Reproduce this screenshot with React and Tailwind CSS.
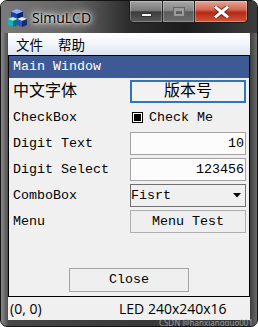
import React from 'react';

const mono = "font-['Liberation_Mono','Noto_Sans_CJK_SC',monospace]";

// Little three-cube app icon in the title bar
const AppIcon = () => (
    <svg width="19" height="18" viewBox="0 0 19 18">
        <polygon points="9,0 15,2.5 9,5 3,2.5" fill="#8fb4ff" />
        <polygon points="3,2.5 9,5 9,11 3,8.5" fill="#1c3fb0" />
        <polygon points="9,5 15,2.5 15,8.5 9,11" fill="#0d2470" />
        <polygon points="5,8 10,10 5,12 0,10" fill="#9ff5f0" />
        <polygon points="0,10 5,12 5,18 0,16" fill="#17b3b0" />
        <polygon points="5,12 10,10 10,16 5,18" fill="#0a6e78" />
        <polygon points="14,8 19,10 14,12 9,10" fill="#e8eef8" />
        <polygon points="9,10 14,12 14,18 9,16" fill="#2850c8" />
        <polygon points="14,12 19,10 19,16 14,18" fill="#122a78" />
    </svg>
);

const CaptionButtons = () => (
    <div className="ml-auto mr-[9px] flex h-[22px] overflow-hidden rounded-b-[5px] border border-t-0 border-[#1b1b1b]">
        {/* Minimize */}
        <div className="flex w-[33px] items-end justify-center border-r border-[#262626] bg-[linear-gradient(180deg,#a2a2a2_0%,#7a7a7a_45%,#3c3c3c_52%,#5a5a5a_100%)] pb-[5px] shadow-[inset_0_0_0_1px_rgba(255,255,255,0.25)]">
            <div className="h-[4px] w-[11px] border border-[#333] bg-white" />
        </div>
        {/* Maximize (disabled) */}
        <div className="flex w-[32px] items-center justify-center border-r border-[#262626] bg-[linear-gradient(180deg,#a8a8a8_0%,#858585_45%,#5a5a5a_52%,#6e6e6e_100%)] shadow-[inset_0_0_0_1px_rgba(255,255,255,0.25)]">
            <div className="h-[8px] w-[10px] border-2 border-t-[3px] border-[#9a9a9a] shadow-[0_0_0_1px_#666]" />
        </div>
        {/* Close */}
        <div className="flex w-[52px] items-center justify-center bg-[linear-gradient(180deg,#e6a595_0%,#d36a55_40%,#b52a15_55%,#d4553a_100%)] shadow-[inset_0_0_0_1px_rgba(255,255,255,0.3)]">
            <svg width="15" height="12" viewBox="0 0 15 12">
                <path d="M2 1.5 L13 10.5 M13 1.5 L2 10.5" stroke="#5a1a10" strokeWidth="4.5" strokeLinecap="square" />
                <path d="M2 1.5 L13 10.5 M13 1.5 L2 10.5" stroke="#fff" strokeWidth="3" strokeLinecap="square" />
            </svg>
        </div>
    </div>
);

const Label = ({ children, cjk }) => (
    <div className={`flex items-center pl-[4px] text-black ${cjk ? 'text-[16px]' : 'text-[13.333px]'}`}>
        {children}
    </div>
);

const App = () => {
    return (
        <div className="h-[327px] w-[258px] bg-white">
            <div className="relative flex h-full flex-col overflow-hidden rounded-[7px] border border-[#151515] bg-[linear-gradient(90deg,#8a8a8a_0%,#474747_3%,#3a3a3a_50%,#3a3a3a_97%,#6a6a6a_100%)]">
                {/* Title bar */}
                <div className="flex h-[32px] shrink-0 items-start bg-[linear-gradient(90deg,#7a7a7a_0%,#626262_30%,#2c2c2c_50%,#1c1c1c_72%,#3c3c3c_100%)]">
                    <div className="ml-[7px] mt-[8px]">
                        <AppIcon />
                    </div>
                    <span className="ml-[5px] mt-[7px] font-['Open_Sans',sans-serif] text-[14px] leading-[20px] text-black [text-shadow:0_0_10px_#fff,0_0_6px_#fff,0_0_3px_#fff]">
                        SimuLCD
                    </span>
                    <CaptionButtons />
                </div>

                {/* Client area */}
                <div className="mx-[7px] mb-[6px] flex flex-1 flex-col">
                    {/* Menu bar */}
                    <div className="flex h-[22px] items-center gap-[15px] bg-[linear-gradient(180deg,#ffffff_0%,#f3f6fb_45%,#dde5f1_100%)] pl-[8px] font-['Noto_Sans_CJK_SC',sans-serif] text-[13.5px] text-black">
                        <span>文件</span>
                        <span>帮助</span>
                    </div>

                    {/* LCD screen 240x240 */}
                    <div className={`flex h-[242px] flex-col border border-black bg-[#f0f0f0] ${mono}`}>
                        <div className="flex h-[22px] items-center bg-[#3d5a95] pl-[4px] text-[13.333px] text-white">
                            Main Window
                        </div>

                        <div className="mt-[2px] grid auto-rows-[23px] grid-cols-[121px_116px] gap-y-[3px]">
                            <Label cjk>中文字体</Label>
                            <div className="flex items-center justify-center border-2 border-[#2f74bf] bg-[#f2f2f2] text-[16px] text-black">
                                版本号
                            </div>

                            <Label>CheckBox</Label>
                            <div className="flex items-center gap-[6px] pl-[2px] text-[13.333px] text-black">
                                <div className="h-[11px] w-[11px] border border-black bg-white p-[1px]">
                                    <div className="h-full w-full bg-black" />
                                </div>
                                Check Me
                            </div>

                            <Label>Digit Text</Label>
                            <div className="flex items-center justify-end border border-[#a3a3a3] bg-[#fcfcfc] pr-[1px] text-[13.333px] text-black">
                                10
                            </div>

                            <Label>Digit Select</Label>
                            <div className="flex items-center justify-end border border-[#a3a3a3] bg-[#fcfcfc] pr-[1px] text-[13.333px] text-black">
                                123456
                            </div>

                            <Label>ComboBox</Label>
                            <div className="flex items-center justify-between border border-[#707070] bg-[#f0f0f0] pr-[4px] text-[13.333px] text-black">
                                <span>Fisrt</span>
                                <svg width="8" height="5" viewBox="0 0 8 5">
                                    <polygon points="0,0 8,0 4,4.5" fill="#000" />
                                </svg>
                            </div>

                            <Label>Menu</Label>
                            <div className="flex items-center justify-center border border-[#adadad] bg-[#efefef] text-[13.333px] text-black">
                                Menu Test
                            </div>
                        </div>

                        <div className="flex-1" />

                        {/* Close button */}
                        <div className="mx-auto mb-[4px] flex h-[24px] w-[120px] items-center justify-center border border-[#a3a3a3] bg-[#efefef] text-[13.333px] text-black">
                            Close
                        </div>
                    </div>

                    {/* Status bar */}
                    <div className="flex h-[23px] items-center bg-[#f0f0f0] pl-[2px] font-['Open_Sans',sans-serif] text-[14px] leading-[14px] text-black">
                        <span className="w-[109px]">(0, 0)</span>
                        <span>LED 240x240x16</span>
                    </div>
                </div>

                {/* Watermark */}
                <span className="pointer-events-none absolute bottom-[-1px] right-[4px] font-['Noto_Sans',sans-serif] text-[8px] leading-[8px] text-[#c8c8c8]/70">
                    CSDN @hanxiangguo001
                </span>
            </div>
        </div>
    );
};

export default App;
